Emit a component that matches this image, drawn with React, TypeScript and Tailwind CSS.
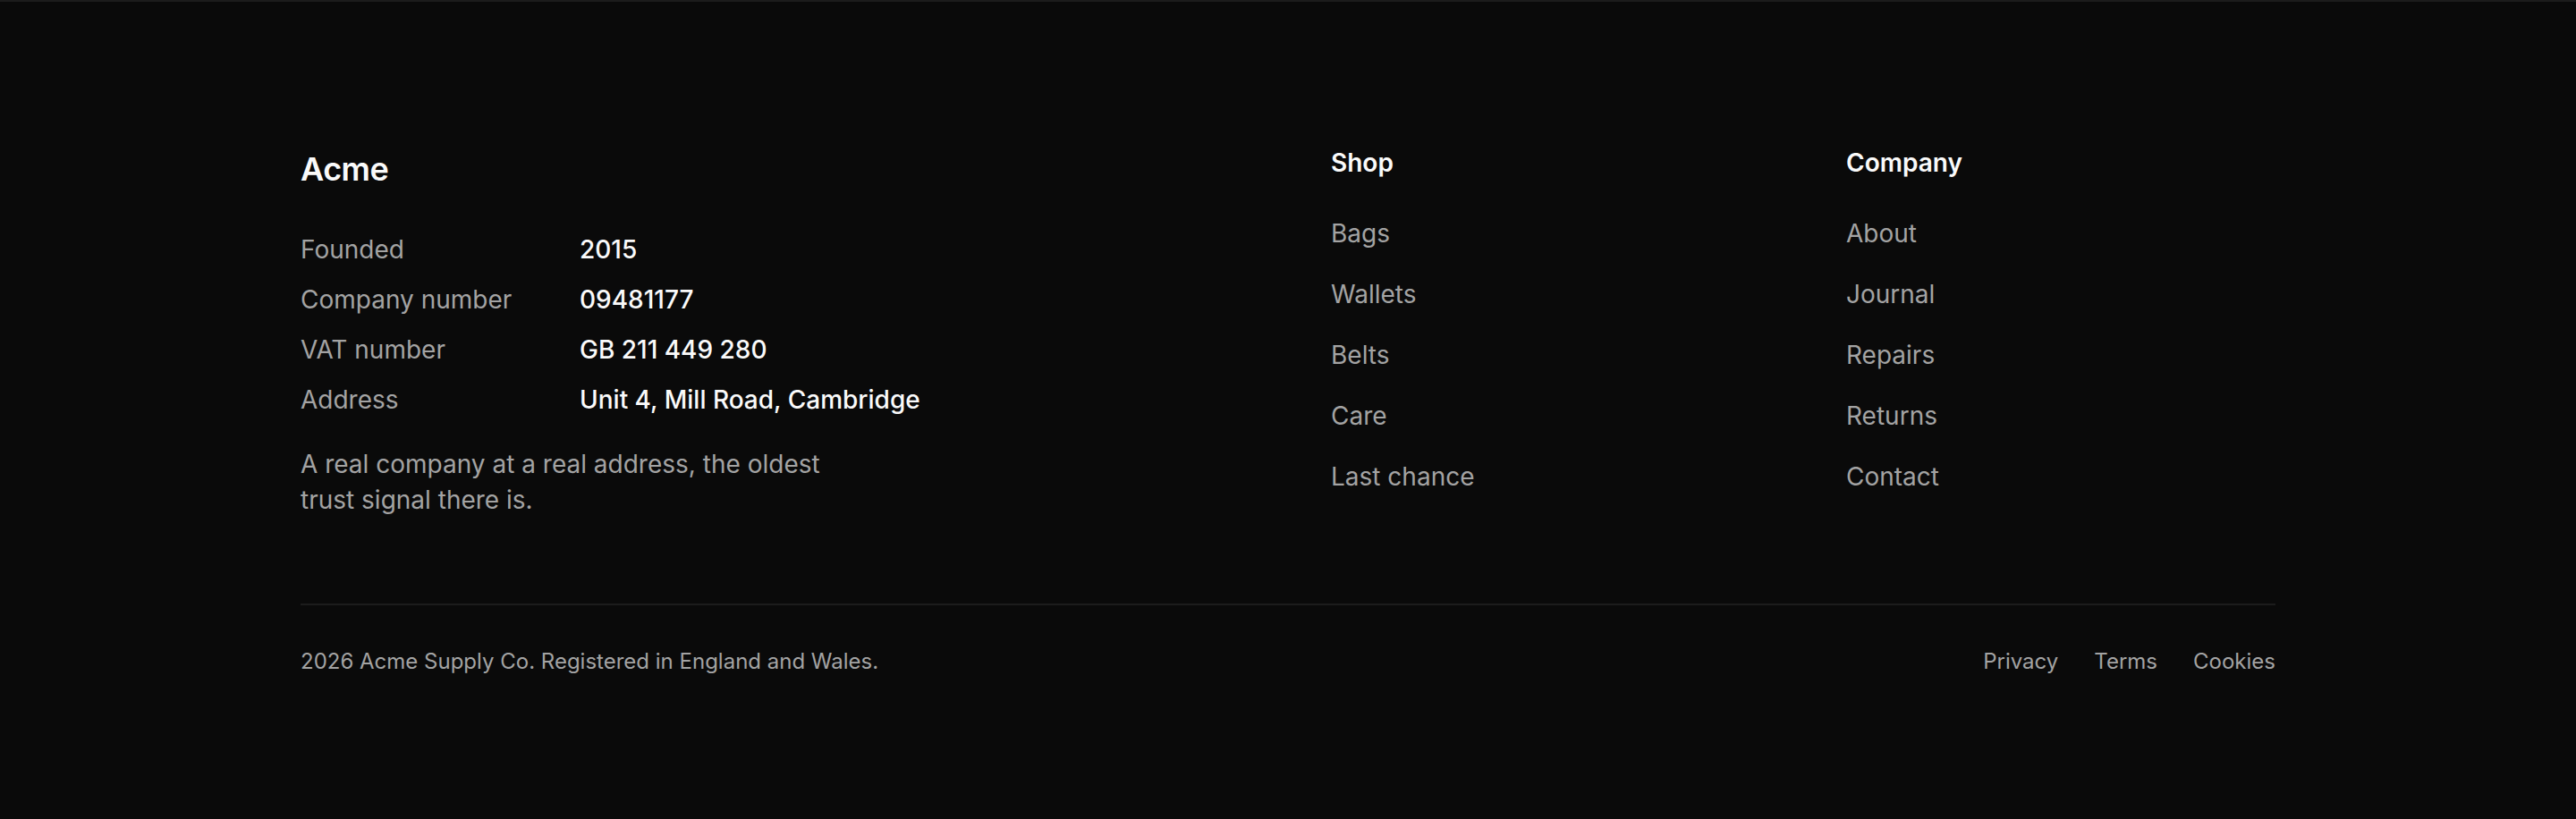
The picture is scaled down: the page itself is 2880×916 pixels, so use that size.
import React from "react";

const facts: [string, string][] = [
  ["Founded", "2015"],
  ["Company number", "09481177"],
  ["VAT number", "GB 211 449 280"],
  ["Address", "Unit 4, Mill Road, Cambridge"],
];

const shop = ["Bags", "Wallets", "Belts", "Care", "Last chance"];
const company = ["About", "Journal", "Repairs", "Returns", "Contact"];

function LinkCol({ title, items }: { title: string; items: string[] }) {
  return (
    <div className="flex flex-col">
      <h3 className="text-[28px] leading-[36px] font-semibold text-[#fafafa]">{title}</h3>
      <ul className="mt-[41px] flex flex-col gap-[28px]">
        {items.map((i) => (
          <li key={i}>
            <a className="text-[28px] leading-[40px] text-[#a3a3a3]" href="#">
              {i}
            </a>
          </li>
        ))}
      </ul>
    </div>
  );
}

export default function App() {
  return (
    <div
      className="min-h-screen w-full bg-[#0a0a0a] border-t-2 border-[#1c1c1c]"
      style={{ fontFamily: "Inter, 'Noto Sans', sans-serif" }}
    >
      <footer className="mx-auto w-[2208px] pt-[162px] pb-[150px]">
        <div className="grid grid-cols-[1056px_480px_480px] gap-x-[96px] items-start">
          <div className="flex flex-col">
            <div className="text-[36px] leading-[50px] font-semibold tracking-[-0.5px] text-[#fafafa]">Acme</div>
            <dl className="mt-[45px] grid grid-cols-[312px_1fr] gap-y-[16px]">
              {facts.map(([k, v]) => (
                <React.Fragment key={k}>
                  <dt className="text-[28px] leading-[40px] text-[#a3a3a3]">{k}</dt>
                  <dd className="text-[28px] leading-[40px] font-medium text-[#fafafa]">{v}</dd>
                </React.Fragment>
              ))}
            </dl>
            <p className="mt-[32px] max-w-[640px] text-[28px] leading-[40px] text-[#a3a3a3]">
              A real company at a real address, the oldest trust signal there is.
            </p>
          </div>
          <LinkCol title="Shop" items={shop} />
          <LinkCol title="Company" items={company} />
        </div>
        <div className="mt-[96px] h-[2px] bg-[#1c1c1c]" />
        <div className="mt-[45px] flex items-center justify-between">
          <p className="text-[24px] leading-[36px] text-[#a3a3a3]">
            2026 Acme Supply Co. Registered in England and Wales.
          </p>
          <nav className="flex items-center gap-[40px]">
            {["Privacy", "Terms", "Cookies"].map((l) => (
              <a key={l} href="#" className="text-[24px] leading-[36px] text-[#a3a3a3]">
                {l}
              </a>
            ))}
          </nav>
        </div>
      </footer>
    </div>
  );
}
